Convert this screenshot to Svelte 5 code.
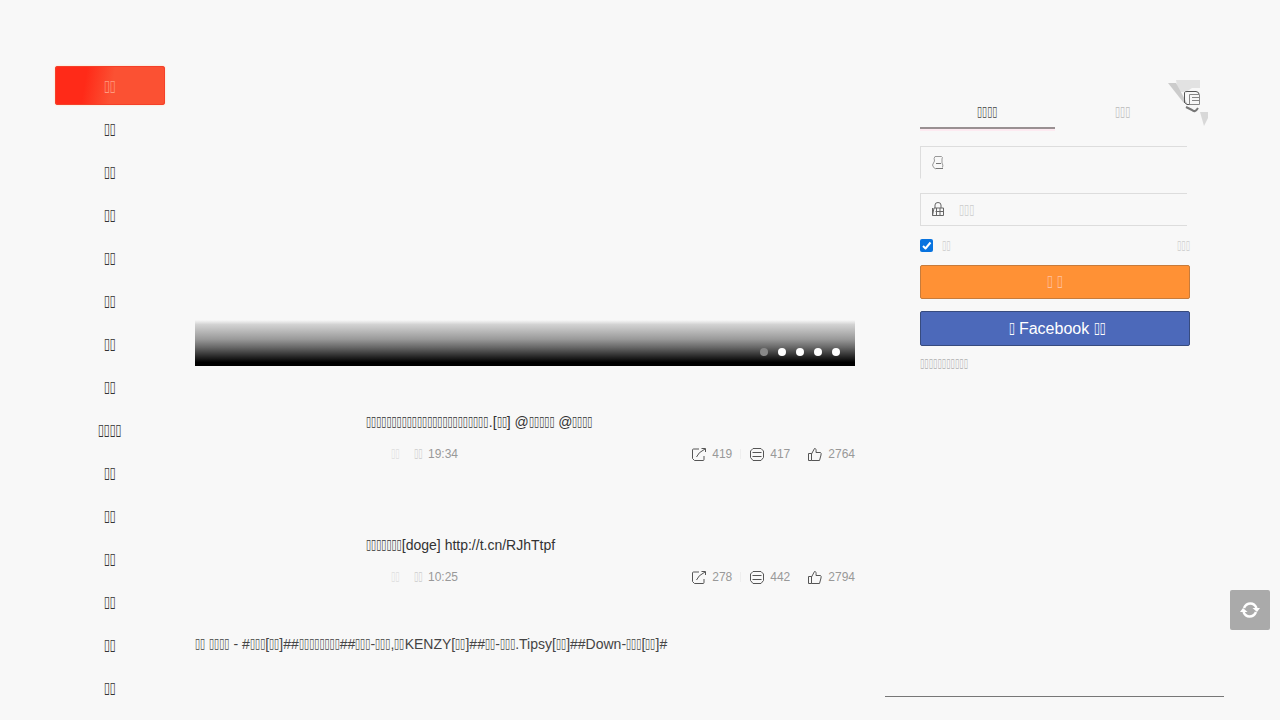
<script>
  const t = (n) => '▯'.repeat(n);
  const nav = [2, 2, 2, 2, 2, 2, 2, 2, 4, 2, 2, 2, 2, 2, 2];
  const posts = [
    {
      title: `${t(24)}.[${t(2)}] @${t(5)} @${t(4)}`,
      time: '19:34',
      counts: ['419', '417', '2764']
    },
    {
      title: `${t(7)}[doge] http://t.cn/RJhTtpf`,
      time: '10:25',
      counts: ['278', '442', '2794']
    }
  ];
  const topic = `${t(2)} ${t(4)} - #${t(3)}[${t(2)}]##${t(8)}##${t(3)}-${t(3)},${t(2)}KENZY[${t(2)}]##${t(2)}-${t(3)}.Tipsy[${t(2)}]##Down-${t(3)}[${t(2)}]#`;
  const parts = (s) => s.split(/(▯+)/).filter(Boolean);
</script>

{#snippet txt(s)}{#each parts(s) as p}{#if p[0] === '▯'}<span class="run" style="width:{p.length * 0.3655}em"><span class="boxes">{p}</span></span>{:else}<span class="plain">{p}</span>{/if}{/each}{/snippet}

<div class="page">
  <nav>
    {#each nav as n, i}
      <a class:active={i === 0}>{@render txt(t(n))}</a>
    {/each}
  </nav>

  <main>
    <div class="slider">
      <div class="shade">
        {#each [0, 1, 2, 3, 4] as d}<i class:dim={d === 0}></i>{/each}
      </div>
    </div>
    {#each posts as p}
      <article>
        <h3>{@render txt(p.title)}</h3>
        <div class="meta">
          <div class="who">{@render txt(t(2))}</div>
          <div class="day">{@render txt(t(2))}</div>
          <div class="time">{p.time}</div>
          <div class="acts">
            <div class="act">
              <svg width="16" height="15" viewBox="0 0 16 15"><path d="M8 2H2.5Q1.5 2 1.5 3V11.5L3.5 13.5H12Q13 13.5 13 12.5V9M5.5 10Q7 5.5 14 2M10.5 1.5H14.5V5" /></svg>
              <b>{p.counts[0]}</b>
            </div>
            <em></em>
            <div class="act">
              <svg width="16" height="15" viewBox="0 0 16 15"><path d="M4 1.5H12L14.5 4V10.5L12 13.5H4L1.5 10.5V4ZM3.5 5.5H12.5M3.5 9.5H12.5" /></svg>
              <b>{p.counts[1]}</b>
            </div>
            <div class="act third">
              <svg width="16" height="15" viewBox="0 0 16 15"><path d="M1.5 6.5H4.5V13.5H1.5ZM4.5 7L7.5 1.5Q9.5 1 9 5.5H13.5Q14.5 6 14 8L12.5 13.5H4.5" /></svg>
              <b>{p.counts[2]}</b>
            </div>
          </div>
        </div>
      </article>
    {/each}
    <p class="topic">{@render txt(topic)}</p>
  </main>

  <aside>
    <div class="corner">
      <svg width="42" height="46" viewBox="0 0 42 46">
        <path d="M8 0H32V8H24L18 12H10Z" fill="#e2e2e2" />
        <path d="M0 3H8L20 25L15 22Z" fill="#ccc" />
        <path d="M32 32H40V38L36 46Z" fill="#d8d8d8" />
        <g fill="none" stroke="#555"><path d="M16.5 22V12.5Q17 11.5 19 11.5H28Q31 12 31 14M16 22L19 24.5H31" /><path d="M21.5 14.5H31.5V24.5H21.5ZM24 17.5H31M24 20.5H31" stroke="#888" /><path d="M18 27L24 30Q27 33 30 28" stroke="#777" stroke-width="2" /></g>
      </svg>
    </div>
    <div class="tabs"><div class="on">{@render txt(t(4))}</div><div>{@render txt(t(3))}</div></div>
    <div class="field user">
      <svg width="14" height="16" viewBox="0 0 14 16"><path d="M4 1.5H10.5Q12 2 11 4V8Q12.5 10 11.5 12.5M4 1.5Q2.5 3 3.5 6L1.5 10Q2 13 5 14" stroke="#999" /><path d="M5 13.5H12M5 8.5H10" stroke="#777" /></svg>
    </div>
    <div class="field pass">
      <svg width="14" height="16" viewBox="0 0 14 16"><path d="M4 7V4Q4 1.5 7 1.5T10 4V7M1.5 7V14.5M3 7H12.5V14.5H1.5ZM4.5 10.5H12M5.5 7V14M9 7V14" stroke="#666" /></svg>
      <div>{@render txt(t(3))}</div>
    </div>
    <div class="remember">
      <div class="check"><svg width="13" height="13" viewBox="0 0 13 13"><path d="M3 7L5.5 9.5L10.5 3.5" fill="none" stroke="#fff" stroke-width="2" /></svg></div>
      <div>{@render txt(t(2))}</div><div class="forgot">{@render txt(t(3))}</div>
    </div>
    <button class="login">{@render txt(`${t(1)} ${t(1)}`)}</button>
    <button class="fb">{@render txt(`${t(1)} Facebook ${t(2)}`)}</button>
    <div class="signup">{@render txt(t(11))}</div>
    <hr />
  </aside>

  <div class="refresh">
    <svg width="22" height="20" viewBox="0 0 22 20" fill="none" stroke="#fff" stroke-width="2.5"><path d="M5 8Q7 3.5 11.5 3.5Q15.5 3.5 17.5 8M17 12Q15 16.5 10.5 16.5Q6.5 16.5 4.5 12" /><path d="M13.5 8H21L18 12ZM1 12L4 8L8.5 12Z" fill="#fff" stroke="none" /></svg>
  </div>
</div>

<style>
  :global(body) { background: #f8f8f8; }
  .page {
    width: 1280px; height: 720px; overflow: hidden; position: relative; box-sizing: border-box;
    display: flex; background: #f8f8f8; color: #333;
    font: 14px/20px "Liberation Sans", Arial, sans-serif;
  }
  .plain { white-space: pre; }
  .run { display: inline-block; height: 1em; line-height: 1em; white-space: nowrap; text-align: left; vertical-align: baseline; }
  .boxes { display: inline-block; line-height: 1em; font-family: "DejaVu Sans Condensed", "DejaVu Sans", sans-serif; transform: translateY(-1px) scaleX(.735); transform-origin: 0 50%; }
  svg path { stroke-linejoin: round; }
  nav { width: 110px; margin: 66px 30px 0 55px; flex: none; }
  nav a { display: block; height: 39px; line-height: 41px; margin-bottom: 4px; text-align: center; font-size: 16px; border-radius: 3px; }
  nav a.active {
    color: #ff9a80; background: linear-gradient(100deg, #ff2a18 28%, #fb5133 52%);
    box-shadow: inset 0 0 0 1px #f5402a, 0 0 2px #ffd9b0;
  }
  main { width: 660px; flex: none; }
  .slider { height: 366px; display: flex; align-items: flex-end; }
  .shade {
    width: 660px; height: 46px; box-sizing: border-box; padding: 28px 15px 0 0;
    display: flex; justify-content: flex-end; gap: 10px;
    background: linear-gradient(#f8f8f8 0, #d2d2d2 10%, #999 42%, #666 60%, #262626 80%, #000 92%);
  }
  .shade i { width: 8px; height: 8px; border-radius: 50%; background: #fff; }
  .shade i.dim { background: #888; }
  article { height: 89px; padding-left: 171px; }
  article:first-of-type { padding-top: 46px; height: 77px; margin-bottom: 46px; }
  h3 { font-size: 14px; font-weight: 400; height: 20px; line-height: 20px; margin: 0; white-space: nowrap; }
  .meta { display: flex; align-items: center; height: 20px; margin-top: 12px; color: #aaa; font-size: 12px; }
  .who { margin-left: 25px; width: 23px; color: #ddd; }
  .day { width: 14px; color: #ccc; }
  .time { color: #999; }
  .acts { margin-left: auto; display: flex; align-items: center; }
  .act { display: flex; align-items: center; gap: 5px; }
  .act svg { fill: none; stroke: #555; }
  .act b { font-weight: 400; color: #999; }
  .acts em { width: 1px; height: 10px; background: #eee; margin: 0 8px 0 7px; }
  .act:first-child { margin-right: 1px; }
  .third { margin-left: 17px; }
  .topic { margin: 10px 0 0; height: 20px; white-space: nowrap; color: #444; }
  aside { width: 270px; margin-left: 65px; flex: none; position: relative; padding-top: 96px; }
  .corner { position: absolute; left: 248px; top: 80px; }
  .tabs { display: flex; height: 33px; }
  .tabs div { flex: 1; text-align: center; line-height: 33px; border-bottom: 2px solid transparent; box-sizing: border-box; color: #bbb; }
  .tabs .on { color: #444; border-color: #999092; box-shadow: 0 2px #fdeaf1; }
  .field { width: 267px; height: 33px; box-sizing: border-box; border: 1px solid #ddd; border-right: 0; display: flex; align-items: center; padding-left: 10px; gap: 14px; font-size: 14px; color: #ccc; }
  .field svg { fill: none; }
  .user { margin-top: 17px; border-bottom-color: #f8f8f8; }
  .pass { margin-top: 14px; }
  .pass svg { margin-top: -2px; }
  .remember { height: 13px; margin-top: 13px; display: flex; align-items: center; gap: 9px; font-size: 12px; color: #ccc; }
  .check { width: 13px; height: 13px; background: #0873df; border-radius: 2px; display: flex; }
  .forgot { margin-left: auto; }
  button { display: block; width: 270px; height: 34px; box-sizing: border-box; border-radius: 2px; font: 16px "Liberation Sans", Arial, sans-serif; padding: 0; }
  .login { margin-top: 13px; border: 1px solid #c77b3b; background: #ff9135; color: #ffc0a0; }
  .fb { margin-top: 12px; height: 35px; border: 1px solid #374b7e; background: #4c69ba; color: #fff; padding: 0 0 0 4px; }
  .signup { margin-top: 8px; height: 20px; font-size: 12px; color: #b0b0b0; }
  hr { width: 339px; height: 1px; background: #777; border: 0; margin: 322px 0 0 -35px; }
  .refresh { position: absolute; left: 1230px; top: 590px; width: 40px; height: 40px; background: #aaa; border-radius: 2px; display: flex; align-items: center; justify-content: center; }
</style>
